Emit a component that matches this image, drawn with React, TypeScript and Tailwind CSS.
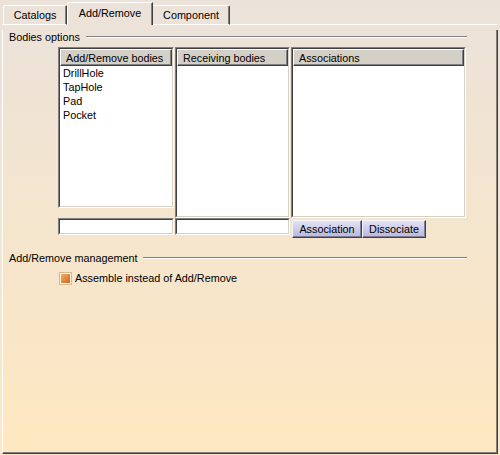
export default function App() {
  return (
    <div className="w-[500px] h-[455px] bg-linear-to-b from-[#ebe2da] to-[#fee8c0] font-['Liberation_Sans',Arial,sans-serif] text-[10.8px] text-black leading-[14px] select-none">
      {/* Tabs */}
      <div className="ml-[2px] w-[496px] h-[25px] flex items-end">
        <div className="w-px h-px bg-white" />
        <div className="w-[64px] h-[20px] border-t border-l border-b border-white border-r border-r-[#404040] rounded-tl-[2px] shadow-[inset_-1px_0_0_#808080] flex justify-center items-center">
          Catalogs
        </div>
        <div className="w-[86px] h-[23px] pb-[3px] border-t border-l border-white border-r border-r-[#404040] rounded-tl-[2px] shadow-[inset_-1px_0_0_#808080] flex justify-center items-center">
          Add/Remove
        </div>
        <div className="w-[77px] h-[20px] border-t border-b border-white border-r border-r-[#404040] rounded-tr-[2px] shadow-[inset_-1px_0_0_#808080] flex justify-center items-center">
          Component
        </div>
        <div className="flex-1 h-px bg-white" />
      </div>

      {/* Panel */}
      <div className="ml-[2px] w-[496px] h-[424px] border-l border-l-white border-r border-b border-[#404040] shadow-[inset_-1px_-1px_0_#808080]">
        <GroupHeader title="Bodies options" />

        <div className="mt-[3px] ml-[55px] flex items-start">
          <div className="flex flex-col">
            <ListBox title="Add/Remove bodies" width="w-[116px]" height="h-[161px]" items={["DrillHole", "TapHole", "Pad", "Pocket"]} />
            <TextField width="w-[116px]" className="mt-[10px]" />
          </div>
          <div className="ml-px flex flex-col">
            <ListBox title="Receiving bodies" width="w-[115px]" height="h-[171px]" items={[]} />
            <TextField width="w-[115px]" />
          </div>
          <div className="ml-px flex flex-col">
            <ListBox title="Associations" width="w-[175px]" height="h-[171px]" items={[]} />
            <div className="mt-[2px] ml-px flex">
              <Button label="Association" width="w-[70px]" />
              <Button label="Dissociate" width="w-[64px]" />
            </div>
          </div>
        </div>

        <GroupHeader title="Add/Remove management" className="mt-[13px]" />

        <div className="mt-[6px] ml-[57px] flex items-center h-[14px]">
          <div className="w-[11px] h-[11px] border border-[#fff4e0] shadow-[0_0_0_1px_#d8b890] bg-linear-to-br from-[#f7b262] to-[#c8641a]" />
          <span className="ml-[4px]">Assemble instead of Add/Remove</span>
        </div>
      </div>
    </div>
  )
}

function GroupHeader({ title, className = "" }: { title: string; className?: string }) {
  return (
    <div className={`flex items-center h-[14px] pl-[6px] pr-[30px] ${className} ${className ? "" : "mt-[5px]"}`}>
      <span>{title}</span>
      <div className="flex-1 ml-[6px] h-[2px] border-t border-t-[#808080] border-b border-b-white" />
    </div>
  )
}

function ListBox({ title, width, height, items }: { title: string; width: string; height: string; items: string[] }) {
  return (
    <div className={`${width} ${height} border-t border-l border-[#808080] border-r border-b border-r-white border-b-white`}>
      <div className="h-full border-t border-l border-[#404040] border-r border-b border-r-[#d4d0c8] border-b-[#d4d0c8] bg-white flex flex-col">
        <div className="h-[17px] shrink-0 bg-[#d4d0c8] border-t border-l border-white border-r border-b border-r-[#404040] border-b-[#404040] shadow-[inset_-1px_-1px_0_#808080] pl-[5px] flex items-center">
          {title}
        </div>
        <div className="pl-[3px]">
          {items.map((item) => (
            <div key={item} className="h-[14px]">
              {item}
            </div>
          ))}
        </div>
      </div>
    </div>
  )
}

function TextField({ width, className = "" }: { width: string; className?: string }) {
  return (
    <div className={`${width} h-[17px] border-t border-l border-[#808080] border-r border-b border-r-white border-b-white ${className}`}>
      <div className="h-full border-t border-l border-[#404040] border-r border-b border-r-[#d4d0c8] border-b-[#d4d0c8] bg-white" />
    </div>
  )
}

function Button({ label, width }: { label: string; width: string }) {
  return (
    <div className={`${width} h-[18px] border-t border-l border-[#f4f4ff] border-r border-b border-r-[#404040] border-b-[#404040] shadow-[inset_-1px_-1px_0_#808098] bg-linear-to-b from-[#e2e2f6] to-[#b8b8de] flex items-center justify-center`}>
      {label}
    </div>
  )
}
